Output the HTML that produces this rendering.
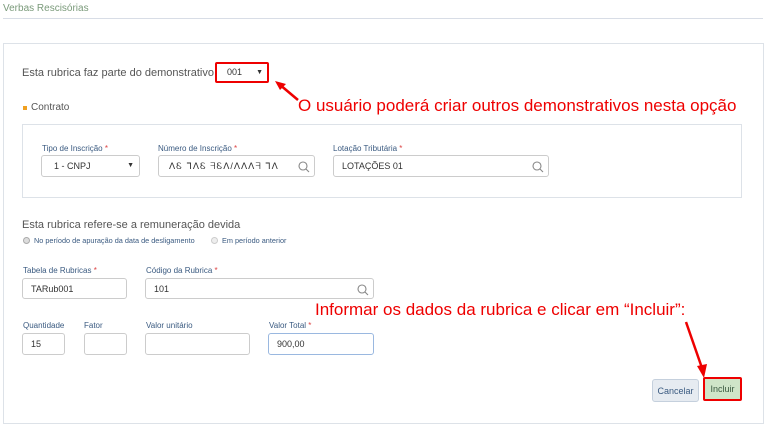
<!DOCTYPE html>
<html><head><meta charset="utf-8"><style>
body{margin:0;width:768px;height:427px;background:#fff;position:relative;overflow:hidden;font-family:"Liberation Sans",sans-serif;}
.a{position:absolute;}
.lbl{position:absolute;font-size:8px;color:#3a5a80;}
.lbl i{color:#d44;font-style:normal;}
.in{position:absolute;border:1px solid #ccc;border-radius:3px;background:#fff;font-size:9px;color:#333;box-sizing:border-box;padding-left:8px;line-height:20px;}
.red{color:#e00;font-size:17px;position:absolute;white-space:nowrap;}
.s{position:absolute;right:3px;top:4px}
</style></head><body>
<div class="a" style="left:3px;top:3px;font-size:10px;color:#7a9a7a">Verbas Rescisórias</div>
<div class="a" style="left:3px;top:18px;width:760px;height:1px;background:#d8dde6"></div>
<div class="a" style="left:3px;top:43px;width:759px;height:379px;border:1px solid #dde2e8;background:#fff"></div>
<div class="a" style="left:22px;top:67px;font-size:11px;color:#555">Esta rubrica faz parte do demonstrativo</div>
<div class="a" style="left:215px;top:62px;width:54px;height:21px;border:2px solid #e00;border-radius:2px;box-sizing:border-box;font-size:9px;line-height:17px;padding-left:10px;color:#333">001<span style="position:absolute;right:4px;font-size:7px">▼</span></div>
<svg class="a" style="left:272px;top:78px" width="30" height="26"><line x1="26" y1="22" x2="7" y2="6" stroke="#e00" stroke-width="2.5"/><polygon points="3,3 14,6 8,12" fill="#e00"/></svg>
<div class="red" style="left:298px;top:96px">O usuário poderá criar outros demonstrativos nesta opção</div>
<div class="a" style="left:23px;top:106px;width:4px;height:4px;background:#f0a020"></div>
<div class="a" style="left:31px;top:102px;font-size:10px;color:#555">Contrato</div>
<div class="a" style="left:22px;top:124px;width:720px;height:74px;border:1px solid #dde2e8;box-sizing:border-box"></div>
<div class="lbl" style="left:42px;top:144px">Tipo de Inscrição <i>*</i></div>
<div class="in" style="left:41px;top:155px;width:99px;height:22px;padding-left:12px">1 - CNPJ<span style="position:absolute;right:5px;font-size:7px">▼</span></div>
<div class="lbl" style="left:158px;top:144px">Número de Inscrição <i>*</i></div>
<div class="in" style="left:158px;top:155px;width:157px;height:22px;padding-left:10px;letter-spacing:1px">ᐱᏋ ᒣᐱᏋ ᖷᏋᐱ/ᐱᐱᐱᖷ ᒣᐱ<svg class="s" width="14" height="14"><g fill="none" stroke="#888" stroke-width="1.1"><circle cx="6" cy="6" r="4"/><line x1="9" y1="9" x2="12" y2="12"/></g></svg></div>
<div class="lbl" style="left:333px;top:144px">Lotação Tributária <i>*</i></div>
<div class="in" style="left:333px;top:155px;width:216px;height:22px">LOTAÇÕES 01<svg class="s" width="14" height="14"><g fill="none" stroke="#888" stroke-width="1.1"><circle cx="6" cy="6" r="4"/><line x1="9" y1="9" x2="12" y2="12"/></g></svg></div>
<div class="a" style="left:22px;top:219px;font-size:11px;color:#555">Esta rubrica refere-se a remuneração devida</div>
<div class="a" style="left:23px;top:237px;width:7px;height:7px;border-radius:50%;border:1px solid #aaa;background:#ddd;box-sizing:border-box"></div>
<div class="a" style="left:34px;top:236px;font-size:7.3px;color:#3a5a80;white-space:nowrap">No período de apuração da data de desligamento</div>
<div class="a" style="left:211px;top:237px;width:7px;height:7px;border-radius:50%;border:1px solid #ccc;background:#eee;box-sizing:border-box"></div>
<div class="a" style="left:222px;top:236px;font-size:7.3px;color:#3a5a80">Em período anterior</div>
<div class="lbl" style="left:23px;top:266px">Tabela de Rubricas <i>*</i></div>
<div class="in" style="left:22px;top:278px;width:105px;height:21px">TARub001</div>
<div class="lbl" style="left:146px;top:266px">Código da Rubrica <i>*</i></div>
<div class="in" style="left:145px;top:278px;width:229px;height:21px">101<svg class="s" width="14" height="14"><g fill="none" stroke="#888" stroke-width="1.1"><circle cx="6" cy="6" r="4"/><line x1="9" y1="9" x2="12" y2="12"/></g></svg></div>
<div class="red" style="left:315px;top:300px">Informar os dados da rubrica e clicar em “Incluir”:</div>
<div class="lbl" style="left:23px;top:321px">Quantidade</div>
<div class="in" style="left:22px;top:333px;width:43px;height:22px">15</div>
<div class="lbl" style="left:84px;top:321px">Fator</div>
<div class="in" style="left:84px;top:333px;width:43px;height:22px"></div>
<div class="lbl" style="left:146px;top:321px">Valor unitário</div>
<div class="in" style="left:145px;top:333px;width:105px;height:22px"></div>
<div class="lbl" style="left:269px;top:321px">Valor Total <i>*</i></div>
<div class="in" style="left:268px;top:333px;width:106px;height:22px;border-color:#9ab8e0">900,00</div>
<svg class="a" style="left:680px;top:318px" width="30" height="64"><line x1="6" y1="4" x2="22" y2="50" stroke="#e00" stroke-width="2.5"/><polygon points="17,48 27,46 24,60" fill="#e00"/></svg>
<div class="a" style="left:652px;top:379px;width:47px;height:23px;border:1px solid #c5d0dd;border-radius:3px;background:#e6ebf1;font-size:9px;color:#3a5a80;text-align:center;line-height:22px;box-sizing:border-box">Cancelar</div>
<div class="a" style="left:703px;top:377px;width:39px;height:24px;border:2px solid #e00;border-radius:2px;background:#cfe5c8;font-size:9px;color:#3a5a40;text-align:center;line-height:21px;box-sizing:border-box">Incluir</div>
</body></html>
